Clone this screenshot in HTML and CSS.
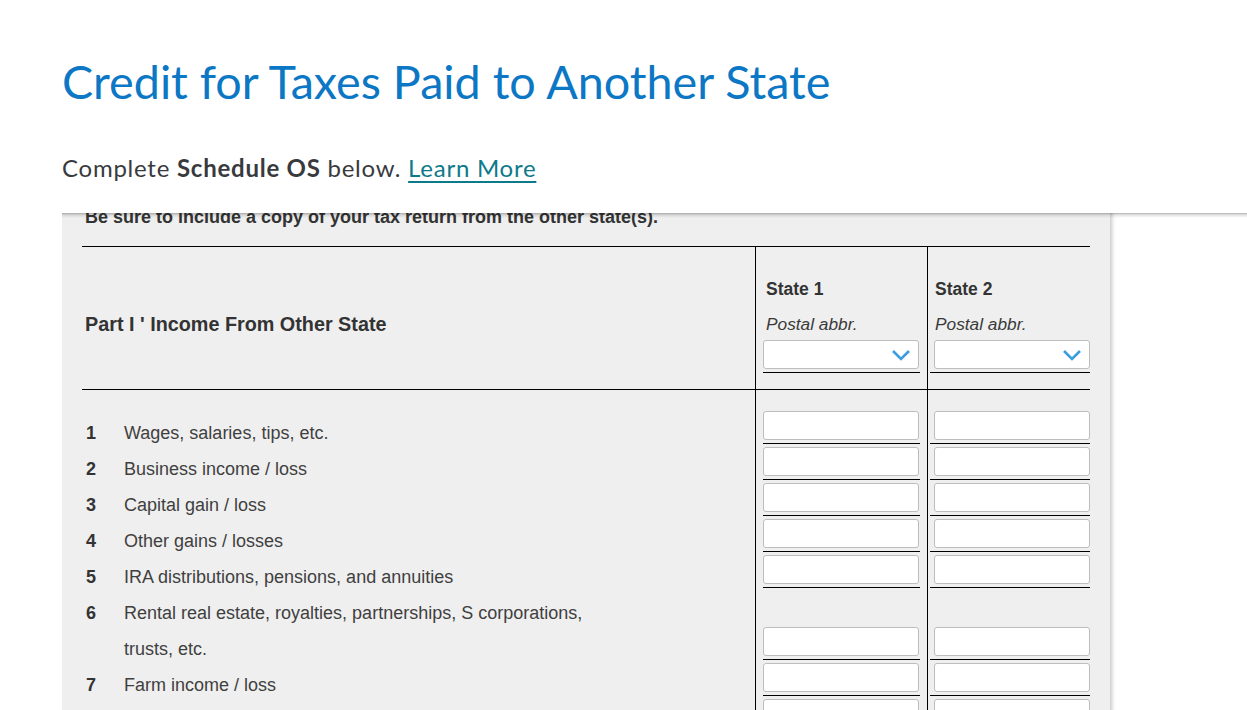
FILE: index.html
```html
<!DOCTYPE html>
<html lang="en">
<head>
<meta charset="utf-8">
<title>Credit for Taxes Paid to Another State</title>
<link rel="stylesheet" href="styles.css">
</head>
<body>
<main class="page">
  <h1 class="title">Credit for Taxes Paid to Another State</h1>
  <p class="intro">Complete <b>Schedule OS</b> below. <a href="#" class="learn">Learn More</a></p>

  <section class="viewport">
    <div class="panel">
      <p class="note">Be sure to include a copy of your tax return from the other state(s).</p>
      <div class="form-grid">
        <div class="cell head-label"><span class="part">Part I ' Income From Other State</span></div>
        <div class="cell head-state s1">
          <div class="state-name">State 1</div>
          <div class="postal">Postal abbr.</div>
          <div class="select">
            <svg class="chev" width="20" height="12" viewBox="0 0 20 12"><path d="M2 2 L10 10 L18 2" fill="none" stroke="#3a9de0" stroke-width="2.6"/></svg>
          </div>
          <div class="rule"></div>
        </div>
        <div class="cell head-state s2">
          <div class="state-name">State 2</div>
          <div class="postal">Postal abbr.</div>
          <div class="select">
            <svg class="chev" width="20" height="12" viewBox="0 0 20 12"><path d="M2 2 L10 10 L18 2" fill="none" stroke="#3a9de0" stroke-width="2.6"/></svg>
          </div>
          <div class="rule"></div>
        </div>

        <div class="cell spacer"></div>
        <div class="cell spacer s1"></div>
        <div class="cell spacer s2"></div>

        <div class="cell label"><span class="num">1</span><span class="txt">Wages, salaries, tips, etc.</span></div>
        <div class="cell input-cell s1"><div class="box"></div><div class="rule"></div></div>
        <div class="cell input-cell s2"><div class="box"></div><div class="rule"></div></div>

        <div class="cell label"><span class="num">2</span><span class="txt">Business income / loss</span></div>
        <div class="cell input-cell s1"><div class="box"></div><div class="rule"></div></div>
        <div class="cell input-cell s2"><div class="box"></div><div class="rule"></div></div>

        <div class="cell label"><span class="num">3</span><span class="txt">Capital gain / loss</span></div>
        <div class="cell input-cell s1"><div class="box"></div><div class="rule"></div></div>
        <div class="cell input-cell s2"><div class="box"></div><div class="rule"></div></div>

        <div class="cell label"><span class="num">4</span><span class="txt">Other gains / losses</span></div>
        <div class="cell input-cell s1"><div class="box"></div><div class="rule"></div></div>
        <div class="cell input-cell s2"><div class="box"></div><div class="rule"></div></div>

        <div class="cell label"><span class="num">5</span><span class="txt">IRA distributions, pensions, and annuities</span></div>
        <div class="cell input-cell s1"><div class="box"></div><div class="rule"></div></div>
        <div class="cell input-cell s2"><div class="box"></div><div class="rule"></div></div>

        <div class="cell label"><span class="num">6</span><span class="txt">Rental real estate, royalties, partnerships, S corporations,<br>trusts, etc.</span></div>
        <div class="cell input-cell tall s1"><div class="box"></div><div class="rule"></div></div>
        <div class="cell input-cell tall s2"><div class="box"></div><div class="rule"></div></div>

        <div class="cell label"><span class="num">7</span><span class="txt">Farm income / loss</span></div>
        <div class="cell input-cell s1"><div class="box"></div><div class="rule"></div></div>
        <div class="cell input-cell s2"><div class="box"></div><div class="rule"></div></div>

        <div class="cell label"></div>
        <div class="cell input-cell s1"><div class="box"></div><div class="rule"></div></div>
        <div class="cell input-cell s2"><div class="box"></div><div class="rule"></div></div>
      </div>
    </div>
  </section>
</main>
</body>
</html>
```

FILE: styles.css
```css
html, body {
  margin: 0;
  padding: 0;
  background: #ffffff;
  overflow: hidden;
}

.page {
  padding-left: 62px;
  height: 710px;
  overflow: hidden;
}

.title {
  margin: 0;
  padding-top: 53px;
  font-family: Lato, "Open Sans", sans-serif;
  font-weight: 400;
  font-size: 46.7px;
  line-height: 56px;
  color: #0c77c4;
}

.intro {
  margin: 0;
  padding-top: 44px;
  font-family: Lato, "Open Sans", sans-serif;
  font-size: 24px;
  letter-spacing: 0.75px;
  line-height: 30px;
  color: #393a3d;
}

.intro b {
  font-weight: 700;
}

.learn {
  color: #0d7a8a;
  text-decoration: underline;
  text-decoration-thickness: 2px;
  text-underline-offset: 4px;
}

.viewport {
  position: relative;
  margin-top: 30px;
  height: 497px;
  overflow: hidden;
}

.viewport::before {
  content: "";
  position: absolute;
  left: 0;
  right: 0;
  top: 0;
  height: 5px;
  background: linear-gradient(to bottom, rgba(0,0,0,0.3), rgba(0,0,0,0.1) 40%, rgba(0,0,0,0));
  z-index: 2;
}

.panel {
  width: 1048px;
  box-sizing: border-box;
  padding: 0 20px;
  background: #efefef;
  box-shadow: 2px 0 4px rgba(0,0,0,0.22);
  margin-top: -16px;
  min-height: 620px;
}

.note {
  margin: 0;
  padding-left: 3px;
  font-family: "Liberation Sans", Arial, sans-serif;
  font-weight: 700;
  font-size: 18px;
  line-height: 20px;
  color: #333;
  height: 49px;
  box-sizing: border-box;
  padding-top: 10px;
}

.form-grid {
  display: grid;
  grid-template-columns: 673px 172px 163px;
  border-top: 1px solid #000;
  font-family: "Liberation Sans", Arial, sans-serif;
  color: #3a3a3a;
}

.s1, .s2 {
  border-left: 1px solid #000;
}

.s1 {
  padding-left: 7px;
  padding-right: 8px;
}

.s2 {
  padding-left: 4px;
  padding-right: 0;
}

.head-label, .head-state {
  border-bottom: 1px solid #000;
  height: 143px;
  box-sizing: border-box;
}

.head-label {
  padding: 65px 0 0 3px;
}

.part {
  font-weight: 700;
  font-size: 19.8px;
  line-height: 24px;
  color: #333;
}

.head-state {
  padding-top: 31px;
  display: flex;
  flex-direction: column;
}

.state-name {
  font-weight: 700;
  font-size: 17.5px;
  line-height: 22px;
  color: #333;
  padding-left: 3px;
}

.postal {
  margin-top: 13px;
  font-style: italic;
  font-size: 17.3px;
  line-height: 22px;
  color: #3a3a3a;
  padding-left: 3px;
}

.select {
  margin-top: 5px;
  height: 29px;
  box-sizing: border-box;
  background: #fff;
  border: 1px solid #bdbdbd;
  border-radius: 3px;
  display: flex;
  align-items: center;
  justify-content: flex-end;
  padding-right: 7px;
}

.s2 .select {
  margin-left: 2px;
}

.chev {
  display: block;
}

.rule {
  height: 1px;
  background: #000;
  margin-top: 3px;
}

.s1 .rule {
  margin-right: -1px;
}

.s2 .rule {
  margin-left: -2px;
}

.spacer {
  height: 18px;
}

.label {
  display: flex;
  padding: 7px 0 0 4px;
  margin-bottom: -7px;
  font-size: 18px;
  line-height: 36px;
}

.num {
  width: 38px;
  flex: none;
  font-weight: 700;
  color: #333;
}

.txt {
  color: #3f3f3f;
}

.input-cell {
  display: flex;
  flex-direction: column;
  justify-content: flex-end;
  padding-top: 3px;
  height: 36px;
  box-sizing: border-box;
}

.input-cell.tall {
  height: 72px;
}

.box {
  height: 29px;
  box-sizing: border-box;
  background: #fff;
  border: 1px solid #bdbdbd;
  border-radius: 3px;
}

.s2 .box {
  margin-left: 2px;
}
```
